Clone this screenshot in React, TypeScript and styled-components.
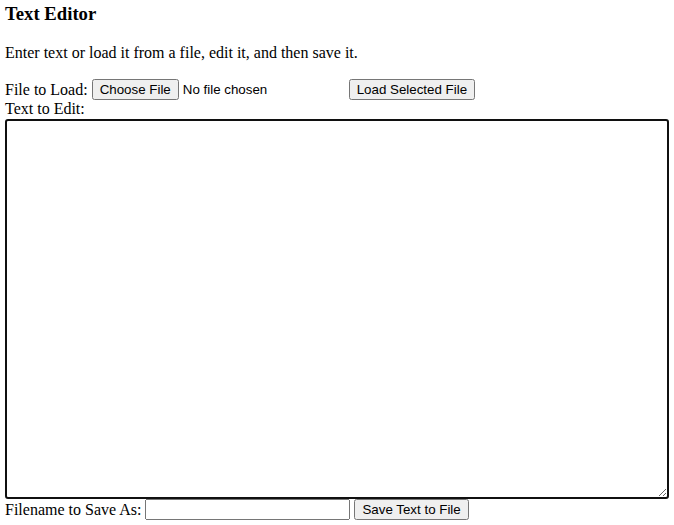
import React, { useState } from "react";
import styled, { createGlobalStyle } from "styled-components";

const GlobalStyle = createGlobalStyle`
  html, body {
    margin: 0;
    padding: 0;
    background: #ffffff;
  }
  body {
    font-family: "Liberation Serif", "Times New Roman", serif;
    font-size: 16px;
    color: #000000;
  }
`;

const Page = styled.div`
  padding: 0 5px;
`;

const Title = styled.h3`
  margin: 3px 0 0 0;
  font-size: 18.72px;
  font-weight: bold;
`;

const Intro = styled.p`
  margin: 19px 0 17px 0;
`;

const Row = styled.div`
  display: flex;
  align-items: center;
  gap: 4px;
  line-height: 20px;
`;

const Label = styled.label`
  white-space: nowrap;
`;

const EditLabel = styled.div`
  margin-bottom: 1px;
`;

const FileInput = styled.input`
  font-family: "Liberation Sans", Arial, sans-serif;
  font-size: 13.33px;
  width: 253px;
`;

const Button = styled.button`
  font-family: "Liberation Sans", Arial, sans-serif;
  font-size: 13.33px;
`;

const NameInput = styled.input`
  width: 197px;
  height: 15px;
`;

const Editor = styled.textarea`
  display: block;
  box-sizing: border-box;
  width: 664px;
  height: 380px;
  margin: 0;
  border: 2px solid #101010;
  border-radius: 3px;
  outline: none;
  resize: both;
  font-family: "Liberation Mono", monospace;
  font-size: 13.33px;
`;

export default function App() {
  const [text, setText] = useState("");
  const [fileName, setFileName] = useState("");

  return (
    <>
      <GlobalStyle />
      <Page>
        <Title>Text Editor</Title>
        <Intro>Enter text or load it from a file, edit it, and then save it.</Intro>
        <Row>
          <Label>File to Load:</Label>
          <FileInput type="file" />
          <Button>Load Selected File</Button>
        </Row>
        <EditLabel>Text to Edit:</EditLabel>
        <Editor value={text} onChange={(e) => setText(e.target.value)} autoFocus />
        <Row>
          <Label>Filename to Save As:</Label>
          <NameInput value={fileName} onChange={(e) => setFileName(e.target.value)} />
          <Button>Save Text to File</Button>
        </Row>
      </Page>
    </>
  );
}
